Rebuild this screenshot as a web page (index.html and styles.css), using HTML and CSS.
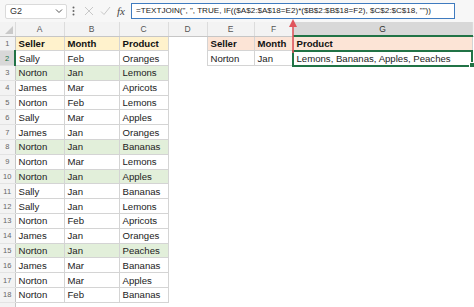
FILE: index.html
```html
<!DOCTYPE html>
<html lang="en">
<head>
    <meta charset="UTF-8">
    <title>TEXTJOIN</title>
    <link rel="stylesheet" href="styles.css">
</head>
<body>
    <div class="app">
        <div class="toolbar">
            <div class="namebox">
                <span>G2</span>
                <svg width="8" height="6" viewBox="0 0 8 6"><path d="M1 1.5 L4 4.5 L7 1.5" fill="none" stroke="#555" stroke-width="1"/></svg>
            </div>
            <svg class="dots" width="3" height="10" viewBox="0 0 3 10"><circle cx="1.5" cy="1.5" r="1" fill="#666"/><circle cx="1.5" cy="5" r="1" fill="#666"/><circle cx="1.5" cy="8.5" r="1" fill="#666"/></svg>
            <div class="fx-icons">
                <svg width="10" height="10" viewBox="0 0 10 10"><path d="M1 1 L9 9 M9 1 L1 9" stroke="#c8c8c8" stroke-width="1"/></svg>
                <svg width="11" height="10" viewBox="0 0 11 10"><path d="M1 5.5 L4 8.5 L10 1" fill="none" stroke="#c8c8c8" stroke-width="1"/></svg>
                <span class="fx">fx</span>
            </div>
            <div class="formula">=TEXTJOIN(", ", TRUE, IF(($A$2:$A$18=E2)*($B$2:$B$18=F2), $C$2:$C$18, ""))</div>
        </div>

        <table class="sheet">
            <colgroup>
                <col style="width:15px"><col style="width:49px"><col style="width:55px"><col style="width:49px">
                <col style="width:39px"><col style="width:47px"><col style="width:39px"><col style="width:179px"><col style="width:20px">
            </colgroup>
            <tr class="colhead">
                <th class="corner"><svg width="8" height="8" viewBox="0 0 8 8"><path d="M8 0 L8 8 L0 8 Z" fill="#c9c9c9"/></svg></th>
                <th>A</th><th>B</th><th>C</th><th>D</th><th>E</th><th>F</th><th class="sel">G</th><th></th>
            </tr>
            <tr>
                <th class="rn">1</th>
                <td class="g hd-a">Seller</td><td class="g hd-a">Month</td><td class="g hd-a">Product</td><td></td>
                <td class="g hd-e">Seller</td><td class="g hd-e">Month</td><td class="g hd-e">Product</td><td></td>
            </tr>
            <tr>
                <th class="rn sel">2</th>
                <td class="g">Sally</td><td class="g">Feb</td><td class="g">Oranges</td><td></td>
                <td class="g">Norton</td><td class="g">Jan</td><td class="g active">Lemons, Bananas, Apples, Peaches<span class="handle"></span></td><td></td>
            </tr>
            <tr class="hit"><th class="rn">3</th><td class="g">Norton</td><td class="g">Jan</td><td class="g">Lemons</td><td colspan="5"></td></tr>
            <tr><th class="rn">4</th><td class="g">James</td><td class="g">Mar</td><td class="g">Apricots</td><td colspan="5"></td></tr>
            <tr><th class="rn">5</th><td class="g">Norton</td><td class="g">Feb</td><td class="g">Lemons</td><td colspan="5"></td></tr>
            <tr><th class="rn">6</th><td class="g">Sally</td><td class="g">Mar</td><td class="g">Apples</td><td colspan="5"></td></tr>
            <tr><th class="rn">7</th><td class="g">James</td><td class="g">Jan</td><td class="g">Oranges</td><td colspan="5"></td></tr>
            <tr class="hit"><th class="rn">8</th><td class="g">Norton</td><td class="g">Jan</td><td class="g">Bananas</td><td colspan="5"></td></tr>
            <tr><th class="rn">9</th><td class="g">Norton</td><td class="g">Mar</td><td class="g">Lemons</td><td colspan="5"></td></tr>
            <tr class="hit"><th class="rn">10</th><td class="g">Norton</td><td class="g">Jan</td><td class="g">Apples</td><td colspan="5"></td></tr>
            <tr><th class="rn">11</th><td class="g">Sally</td><td class="g">Jan</td><td class="g">Bananas</td><td colspan="5"></td></tr>
            <tr><th class="rn">12</th><td class="g">Sally</td><td class="g">Jan</td><td class="g">Lemons</td><td colspan="5"></td></tr>
            <tr><th class="rn">13</th><td class="g">Norton</td><td class="g">Feb</td><td class="g">Apricots</td><td colspan="5"></td></tr>
            <tr><th class="rn">14</th><td class="g">James</td><td class="g">Jan</td><td class="g">Oranges</td><td colspan="5"></td></tr>
            <tr class="hit"><th class="rn">15</th><td class="g">Norton</td><td class="g">Jan</td><td class="g">Peaches</td><td colspan="5"></td></tr>
            <tr><th class="rn">16</th><td class="g">James</td><td class="g">Mar</td><td class="g">Bananas</td><td colspan="5"></td></tr>
            <tr><th class="rn">17</th><td class="g">Norton</td><td class="g">Mar</td><td class="g">Apples</td><td colspan="5"></td></tr>
            <tr><th class="rn">18</th><td class="g">Norton</td><td class="g">Feb</td><td class="g">Bananas</td><td colspan="5"></td></tr>
            <tr><th class="rn"></th><td colspan="8"></td></tr>
        </table>

        <svg class="arrow" width="10" height="34" viewBox="0 0 10 34">
            <path d="M5 6 L5 34" stroke="#e0555c" stroke-width="1.6"/>
            <path d="M1 8 L5 0 L9 8 Z" fill="#e0555c"/>
        </svg>
    </div>
</body>
</html>
```

FILE: styles.css
```css
body {
    margin: 0;
    background: #fff;
    font-family: "Liberation Sans", Arial, sans-serif;
}

.app {
    position: relative;
    width: 474px;
    height: 307px;
    overflow: hidden;
}

/* formula bar */
.toolbar {
    display: flex;
    align-items: center;
    height: 22px;
    padding: 0 0 0 5px;
    background: #f7f7f7;
    box-sizing: border-box;
}

.namebox {
    display: flex;
    align-items: center;
    justify-content: space-between;
    width: 62px;
    height: 15px;
    padding: 0 3px 0 4px;
    box-sizing: border-box;
    background: #fff;
    border: 1px solid #dadada;
    border-radius: 2px;
    font-size: 9px;
    color: #333;
}

.dots {
    margin-left: 5px;
}

.fx-icons {
    display: flex;
    align-items: center;
    gap: 6px;
    margin-left: 9px;
    width: 47px;
}

.fx {
    font-family: "Liberation Serif", serif;
    font-style: italic;
    font-size: 11px;
    color: #444;
}

.formula {
    flex: 1;
    height: 16px;
    margin-right: 19px;
    padding-left: 4px;
    box-sizing: border-box;
    border: 1.5px solid #3f7bbf;
    background: #fff;
    font-size: 8.1px;
    line-height: 13px;
    color: #222;
    white-space: nowrap;
    overflow: hidden;
}

/* grid */
.sheet {
    table-layout: fixed;
    border-collapse: collapse;
    width: 492px;
    font-size: 9.6px;
    color: #222;
}

.sheet tr {
    height: 14.8px;
}

.colhead {
    height: 14px !important;
}

.colhead th {
    background: #f3f3f3;
    border-right: 1px solid #dcdcdc;
    border-bottom: 1px solid #c6c6c6;
    font-weight: normal;
    font-size: 8.5px;
    color: #555;
    padding: 0;
}

.colhead th.sel {
    background: #d8d8d8;
    border-bottom: 2px solid #217346;
    color: #333;
}

.corner {
    text-align: right;
    vertical-align: bottom;
    line-height: 0;
}

.corner svg {
    margin: 0 2px 2px 0;
}

.rn {
    background: #f3f3f3;
    border-right: 1px solid #c6c6c6;
    border-bottom: 1px solid #e3e3e3;
    font-weight: normal;
    font-size: 7.5px;
    color: #666;
    padding: 0;
    text-align: center;
}

.rn.sel {
    background: #d8d8d8;
    border-right: 2px solid #217346;
    color: #217346;
}

.sheet td {
    padding: 0 0 0 3px;
    white-space: nowrap;
    overflow: hidden;
}

.g {
    border: 1px solid #d4d4d4;
}

.hd-a {
    background: #fff2cc;
    font-weight: bold;
    color: #111;
}

.hd-e {
    background: #fce4d6;
    font-weight: bold;
    color: #111;
}

.hit .g {
    background: #e2efda;
}

.sheet td.active {
    position: relative;
    overflow: visible;
    outline: 2px solid #217346;
    outline-offset: -1px;
}

.handle {
    position: absolute;
    right: -3px;
    bottom: -3px;
    width: 4px;
    height: 4px;
    background: #217346;
    border: 1px solid #fff;
}

.arrow {
    position: absolute;
    left: 288px;
    top: 19px;
}
```
